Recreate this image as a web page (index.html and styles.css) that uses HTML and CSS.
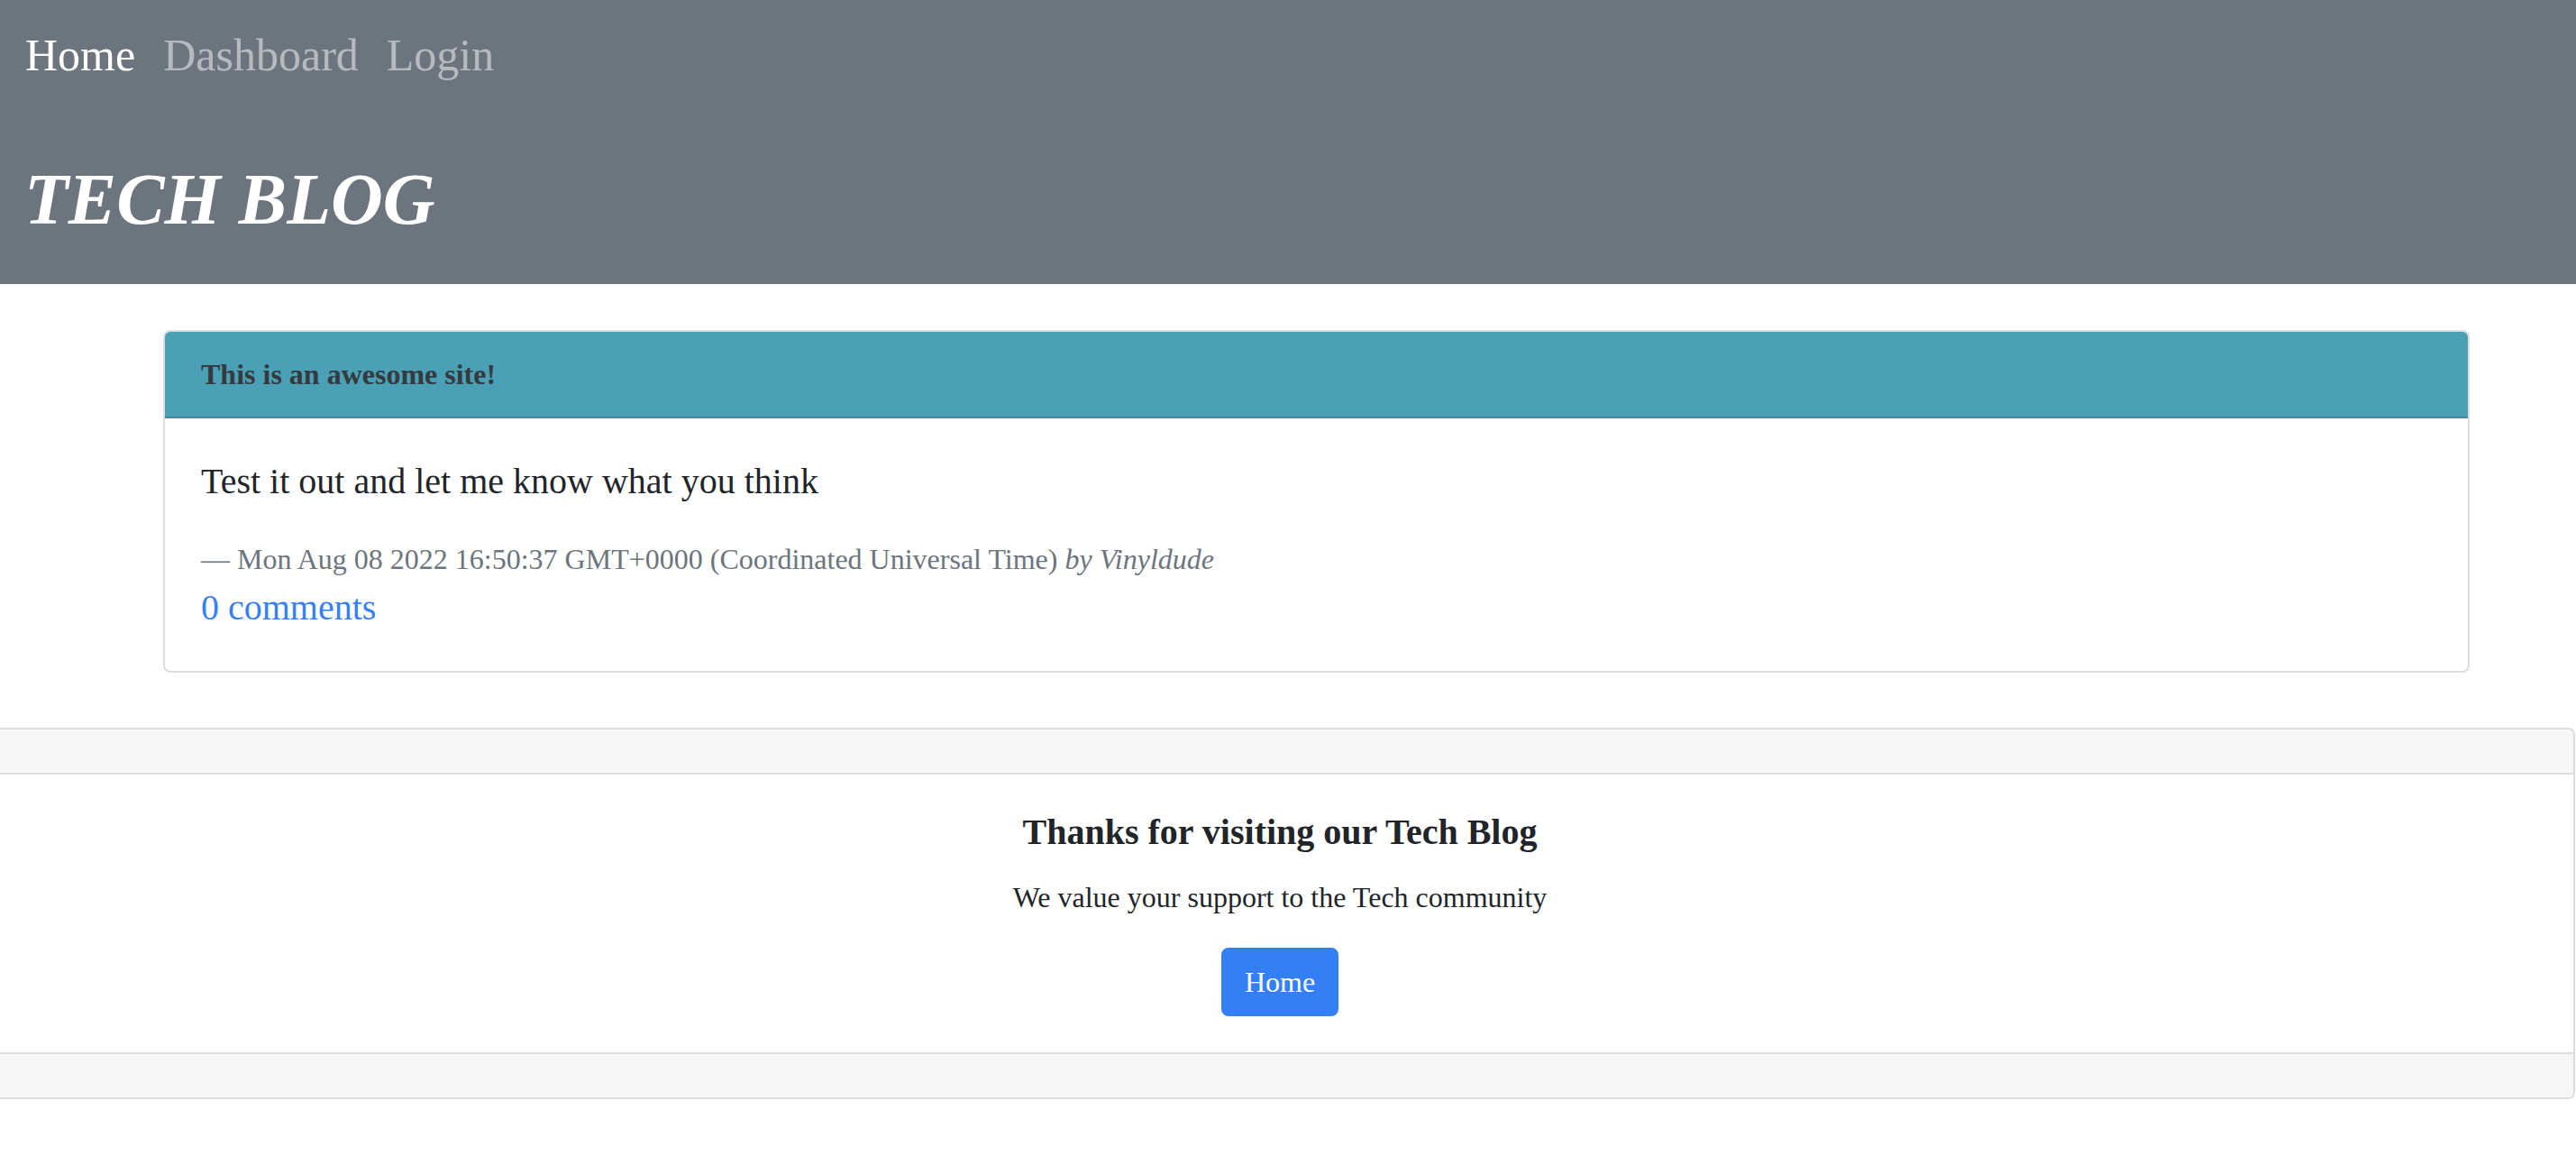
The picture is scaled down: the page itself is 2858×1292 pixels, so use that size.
FILE: index.html
```html
<!DOCTYPE html>
<html lang="en">
<head>
<meta charset="utf-8">
<title>Tech Blog</title>
<link rel="stylesheet" href="styles.css">
</head>
<body>
<header class="site-header">
  <nav class="site-nav">
    <a class="nav-link active" href="#">Home</a>
    <a class="nav-link" href="#">Dashboard</a>
    <a class="nav-link" href="#">Login</a>
  </nav>
  <h1 class="site-title">TECH BLOG</h1>
</header>

<main class="posts">
  <article class="card post">
    <div class="post-header">This is an awesome site!</div>
    <div class="post-body">
      <p class="post-text">Test it out and let me know what you think</p>
      <div class="post-meta">— Mon Aug 08 2022 16:50:37 GMT+0000 (Coordinated Universal Time) <cite>by Vinyldude</cite></div>
      <div class="post-comments"><a href="#">0 comments</a></div>
    </div>
  </article>
</main>

<footer class="card site-footer">
  <div class="footer-band footer-top"></div>
  <div class="footer-body">
    <h5 class="footer-title">Thanks for visiting our Tech Blog</h5>
    <p class="footer-text">We value your support to the Tech community</p>
    <a class="btn-home" href="#">Home</a>
  </div>
  <div class="footer-band footer-bottom"></div>
</footer>
</body>
</html>
```

FILE: styles.css
```css
* {
  box-sizing: border-box;
}

html, body {
  margin: 0;
  padding: 0;
  background: #ffffff;
}

body {
  font-family: "Liberation Serif", "Times New Roman", serif;
  color: #212529;
  width: 2858px;
  overflow-x: hidden;
}

a {
  text-decoration: none;
}

/* Header */
.site-header {
  background: #6c757d;
  height: 315px;
  padding: 25px 0 0 28px;
}

.site-nav {
  display: flex;
  gap: 31px;
  font-size: 50px;
  line-height: 72px;
}

.nav-link {
  color: rgba(255, 255, 255, 0.5);
}

.nav-link.active {
  color: #ffffff;
}

.site-title {
  margin: 76px 0 0 -1px;
  font-size: 80px;
  line-height: 96px;
  font-weight: bold;
  font-style: italic;
  color: #ffffff;
}

/* Post card */
.card {
  border: 2px solid #dcdcdc;
  border-radius: 8px;
  background: #ffffff;
  overflow: hidden;
}

.posts {
  padding: 51px 118px 0 181px;
}

.post-header {
  background: #4aa1b6;
  border-bottom: 2px solid #3f8b9e;
  color: #343a40;
  font-weight: bold;
  font-size: 32px;
  line-height: 46px;
  padding: 24px 40px;
}

.post-body {
  padding: 40px;
  font-size: 40px;
  line-height: 60px;
}

.post-text {
  margin: 0 0 32px 0;
  color: #212529;
}

.post-meta {
  font-size: 32px;
  line-height: 48px;
  color: #6c757d;
}

.post-meta cite {
  font-style: italic;
}

.post-comments a {
  color: #3680f5;
}

/* Footer */
.site-footer {
  margin: 61px 1px 0 -17px;
}

.footer-band {
  background: #f6f6f6;
  height: 50px;
}

.footer-top {
  border-bottom: 2px solid #dcdcdc;
}

.footer-bottom {
  border-top: 2px solid #dcdcdc;
}

.site-footer.card {
  border-color: #dcdcdc;
}

.footer-body {
  padding: 40px;
  text-align: center;
}

.footer-title {
  margin: 0 0 24px 0;
  font-size: 40px;
  line-height: 48px;
  font-weight: bold;
  color: #212529;
}

.footer-text {
  margin: 0 0 32px 0;
  font-size: 32px;
  line-height: 48px;
  color: #212529;
}

.btn-home {
  display: inline-block;
  vertical-align: top;
  background: #347ff5;
  border: 2px solid #347ff5;
  border-radius: 8px;
  color: #ffffff;
  font-size: 32px;
  line-height: 48px;
  padding: 12px 24px;
}
```
